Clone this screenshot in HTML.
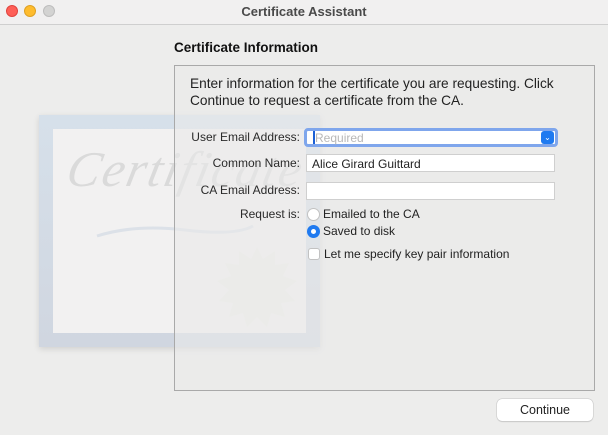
<!DOCTYPE html>
<html><head><meta charset="utf-8"><style>
*{margin:0;padding:0;box-sizing:border-box}
body{width:608px;height:435px;background:#ededec;font-family:"Liberation Sans",sans-serif;position:relative;overflow:hidden;color:#222}
.abs{position:absolute}
.title{top:0;left:0;width:608px;height:25px;background:#f1f0f0;border-bottom:1px solid #cfcfcf}
.dot{width:12px;height:12px;border-radius:50%;top:5px}
.lbl{font-size:12px;color:#2a2a2a;text-align:right;width:200px;left:100px}
.field{background:#fff;border:1px solid #cfcfcf;left:306px;width:249px;height:18px;font-size:12px;padding:2px 0 0 5px}
</style></head><body>
<div class="abs title"></div>
<div class="abs dot" style="left:6px;background:#fe5f57;border:1px solid #e0443e"></div>
<div class="abs dot" style="left:24px;background:#febc2e;border:1px solid #dea123"></div>
<div class="abs dot" style="left:43px;background:#d3d3d2;border:1px solid #bdbdbd"></div>
<div class="abs" style="left:0;width:608px;top:4px;text-align:center;font-weight:bold;font-size:13px;color:#4a4a4a">Certificate Assistant</div>

<!-- certificate image -->
<div class="abs" style="left:39px;top:115px;width:281px;height:232px;background:linear-gradient(#d6e0ea,#d0d6e0);box-shadow:0 2px 6px rgba(0,0,0,.12)"></div>
<div class="abs" style="left:53px;top:129px;width:253px;height:204px;background:#f2f1f1"></div>
<div class="abs" style="left:68px;top:140px;font-family:'Liberation Serif',serif;font-style:italic;font-size:50px;color:#dadada;letter-spacing:2px;transform:skewX(-12deg)">Certificate</div>
<svg class="abs" style="left:95px;top:220px" width="160" height="22"><path d="M2 16 Q40 4 90 10 T158 6" stroke="#dce1e8" stroke-width="3" fill="none"/></svg>
<svg class="abs" style="left:215px;top:245px" width="85" height="85"><polygon fill="#eeede8" points="42,2 48,14 60,6 60,20 74,18 68,31 82,36 70,45 80,56 66,58 70,72 56,68 52,82 42,72 32,82 28,68 14,72 18,58 4,56 14,45 2,36 16,31 10,18 24,20 24,6 36,14"/></svg>

<div class="abs" style="left:174px;top:40px;font-weight:bold;font-size:13.5px;color:#111">Certificate Information</div>
<div class="abs" style="left:174px;top:65px;width:421px;height:326px;border:1px solid #a9a9a9;background:rgba(233,233,233,0.6)"></div>
<div class="abs" style="left:190px;top:75px;font-size:13.7px;line-height:17px;color:#222">Enter information for the certificate you are requesting. Click<br>Continue to request a certificate from the CA.</div>

<div class="abs lbl" style="top:130px">User Email Address:</div>
<div class="abs lbl" style="top:156px">Common Name:</div>
<div class="abs lbl" style="top:183px">CA Email Address:</div>
<div class="abs lbl" style="top:207px">Request is:</div>

<div class="abs" style="left:304px;top:128px;width:254px;height:19px;border:3px solid #7fa6ec;border-radius:4px;background:#fff"></div>
<div class="abs" style="left:313px;top:131px;width:2px;height:13px;background:#1a5fd6"></div>
<div class="abs" style="left:315px;top:131px;font-size:12px;color:#b8b8b8">Required</div>
<div class="abs" style="left:541px;top:131px;width:13px;height:13px;border-radius:3px;background:#1f7af0;color:#fff;font-size:8px;text-align:center;line-height:13px">&#8964;</div>
<div class="abs field" style="top:154px">Alice Girard Guittard</div>
<div class="abs field" style="top:182px"></div>

<div class="abs" style="left:307px;top:208px;width:13px;height:13px;border-radius:50%;background:#fff;border:1px solid #c2c2c2"></div>
<div class="abs" style="left:323px;top:207px;font-size:12px">Emailed to the CA</div>
<div class="abs" style="left:307px;top:225px;width:13px;height:13px;border-radius:50%;background:#1f7af0"></div>
<div class="abs" style="left:311px;top:229px;width:5px;height:5px;border-radius:50%;background:#fff"></div>
<div class="abs" style="left:323px;top:224px;font-size:12px">Saved to disk</div>
<div class="abs" style="left:308px;top:248px;width:12px;height:12px;border-radius:3px;background:#fff;border:1px solid #c2c2c2"></div>
<div class="abs" style="left:324px;top:247px;font-size:12px">Let me specify key pair information</div>

<div class="abs" style="left:497px;top:399px;width:96px;height:22px;background:#fff;border-radius:5px;box-shadow:0 0 0 .5px #c4c4c4,0 1px 1px rgba(0,0,0,.15);text-align:center;font-size:12.5px;line-height:22px;color:#222">Continue</div>
</body></html>
